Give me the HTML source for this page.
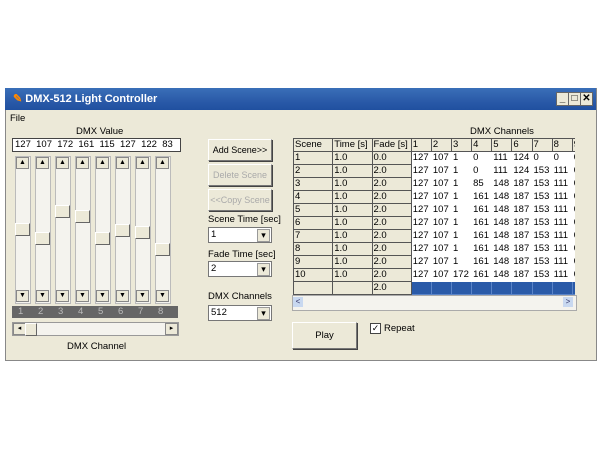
<!DOCTYPE html><html><head><style>
body{margin:0;width:600px;height:450px;background:#fff;position:relative;overflow:hidden;font-family:"Liberation Sans",sans-serif;font-size:9.5px;color:#000}
.a{position:absolute;white-space:nowrap}
.win{left:5px;top:88px;width:590px;height:271px;background:#ece9d8;border:1px solid #888}
.title{left:5px;top:88px;width:591px;height:22px;background:linear-gradient(#3a6fb8,#2a5aa8 60%,#2050a0);color:#fff;font-weight:bold;font-size:11px;line-height:22px}
.btn{background:#ece9d8;border:1px solid #777;border-top-color:#fff;border-left-color:#fff;box-shadow:1px 1px 0 #444;text-align:center;font-size:9px}
.combo{background:#fff;border:1px solid #777;height:14px;line-height:14px;padding-left:2px}
.combo:after{content:"▾";position:absolute;right:1px;top:1px;width:11px;height:11px;background:#ece9d8;border:1px solid #999;font-size:9px;line-height:11px;text-align:center}
table{border-collapse:collapse;font-size:9.5px;table-layout:fixed;width:300px}
td{border:1px solid #555;height:12px;padding:0 1px;line-height:12px;white-space:nowrap;overflow:hidden}
.trk{width:14px;height:146px;background:#f4f3ee;border:1px solid #bbb}
.ar{width:11px;height:10px;background:#ece9d8;border:1px solid #888;font-size:7px;line-height:10px;text-align:center}
.th{width:13px;height:11px;background:#ece9d8;border:1px solid #666;border-top-color:#fff;border-left-color:#fff}
</style></head><body>
<div class="a win"></div>
<div class="a title"><span style="margin-left:8px;color:#f80">✎</span> DMX-512 Light Controller</div>
<div class="a" style="left:556px;top:92px;width:11px;height:12px;background:#ece9d8;border:1px solid #666;font-size:10px;font-weight:bold;text-align:center;line-height:12px">_</div>
<div class="a" style="left:568px;top:92px;width:11px;height:12px;background:#ece9d8;border:1px solid #666;font-size:10px;text-align:center;line-height:12px">□</div>
<div class="a" style="left:580px;top:92px;width:11px;height:12px;background:#ece9d8;border:1px solid #666;font-size:10px;font-weight:bold;text-align:center;line-height:12px">✕</div>
<div class="a" style="left:10px;top:113px">File</div>
<div class="a" style="left:76px;top:126px">DMX Value</div>
<div class="a" style="left:12px;top:138px;width:165px;height:12px;background:#fff;border:1px solid #444;line-height:12px;font-size:9.5px;padding-left:2px;box-sizing:content-box">127&nbsp; 107&nbsp; 172&nbsp; 161&nbsp; 115&nbsp; 127&nbsp; 122&nbsp; 83</div>
<div id="sl"></div>
<div class="a" style="left:12px;top:306px;width:166px;height:12px;background:#666;color:#bbb;line-height:12px" id="cb"></div>
<div class="a" style="left:12px;top:322px;width:165px;height:12px;background:#f4f3ee;border:1px solid #999"></div>
<div class="a ar" style="left:13px;top:323px">◂</div><div class="a th" style="left:25px;top:323px;width:10px"></div><div class="a ar" style="left:165px;top:323px">▸</div>
<div class="a" style="left:67px;top:341px">DMX Channel</div>
<div class="a btn" style="left:208px;top:139px;width:62px;height:20px;line-height:20px">Add Scene&gt;&gt;</div>
<div class="a btn" style="left:208px;top:164px;width:62px;height:20px;line-height:20px;color:#aaa">Delete Scene</div>
<div class="a btn" style="left:208px;top:189px;width:62px;height:20px;line-height:20px;color:#aaa">&lt;&lt;Copy Scene</div>
<div class="a" style="left:208px;top:214px">Scene Time [sec]</div>
<div class="a combo" style="left:208px;top:227px;width:60px">1</div>
<div class="a" style="left:208px;top:249px">Fade Time [sec]</div>
<div class="a combo" style="left:208px;top:261px;width:60px">2</div>
<div class="a" style="left:208px;top:291px">DMX Channels</div>
<div class="a combo" style="left:208px;top:305px;width:60px">512</div>
<div class="a" style="left:470px;top:126px">DMX Channels</div>
<div class="a" style="left:293px;top:138px;width:282px;height:157px;overflow:hidden;background:#fff">
<table id="g"></table></div>
<div class="a" style="left:292px;top:295px;width:283px;height:14px;background:#f4f3ee;border:1px solid #aaa"></div>
<div class="a" style="left:293px;top:297px;width:10px;height:10px;background:#c8d8f0;font-size:8px;line-height:10px;text-align:center;color:#336">&lt;</div>
<div class="a" style="left:563px;top:297px;width:10px;height:10px;background:#c8d8f0;font-size:8px;line-height:10px;text-align:center;color:#336">&gt;</div>
<div class="a btn" style="left:292px;top:322px;width:63px;height:25px;line-height:25px;font-size:9.5px">Play</div>
<div class="a" style="left:370px;top:323px;width:9px;height:9px;background:#fff;border:1px solid #444;font-size:9px;line-height:9px;text-align:center">✓</div>
<div class="a" style="left:384px;top:323px">Repeat</div>
<script>
var s='',th=[223,232,205,210,232,224,226,243];
for(var i=0;i<8;i++){var x=15+i*20;
s+='<div class="a trk" style="left:'+x+'px;top:156px"></div><div class="a ar" style="left:'+(x+1)+'px;top:157px">▲</div><div class="a ar" style="left:'+(x+1)+'px;top:290px">▼</div><div class="a th" style="left:'+x+'px;top:'+th[i]+'px"></div>';}
document.getElementById('sl').innerHTML=s;
var c='';for(var i=0;i<8;i++)c+='<span class="a" style="left:'+(6+i*20)+'px;top:0">'+(i+1)+'</span>';document.getElementById('cb').innerHTML=c;
var d=[["1","1.0","0.0","127 107 1 0 111 124 0 0"],["2","1.0","2.0","127 107 1 0 111 124 153 111"],["3","1.0","2.0","127 107 1 85 148 187 153 111"]];
for(var r=4;r<=9;r++)d.push([""+r,"1.0","2.0","127 107 1 161 148 187 153 111"]);
d.push(["10","1.0","2.0","127 107 172 161 148 187 153 111"]);
var w=[39,39,39,20,20,20,20,20,20,20,20,20];
var h='<colgroup>';w.forEach(function(x){h+='<col style="width:'+x+'px">'});h+='</colgroup><tr>';["Scene","Time [s]","Fade [s]","1","2","3","4","5","6","7","8","9"].forEach(function(t,i){h+='<td style="background:#ece9d8">'+t+'</td>'});h+='</tr>';
d.forEach(function(r){h+='<tr><td style="background:#ece9d8">'+r[0]+'</td><td style="background:#ece9d8">'+r[1]+'</td><td style="background:#ece9d8">'+r[2]+'</td>';r[3].split(' ').forEach(function(v){h+='<td style="border-color:#fff">'+v+'</td>'});h+='<td style="border-color:#fff">0</td></tr>'});
h+='<tr><td style="background:#ece9d8"></td><td style="background:#ece9d8"></td><td style="background:#ece9d8">2.0</td>';for(var k=0;k<9;k++)h+='<td style="background:#2a5aa8;border-color:#5a84c8"></td>';h+='</tr>';
document.getElementById('g').innerHTML=h;
</script>
</body></html>
